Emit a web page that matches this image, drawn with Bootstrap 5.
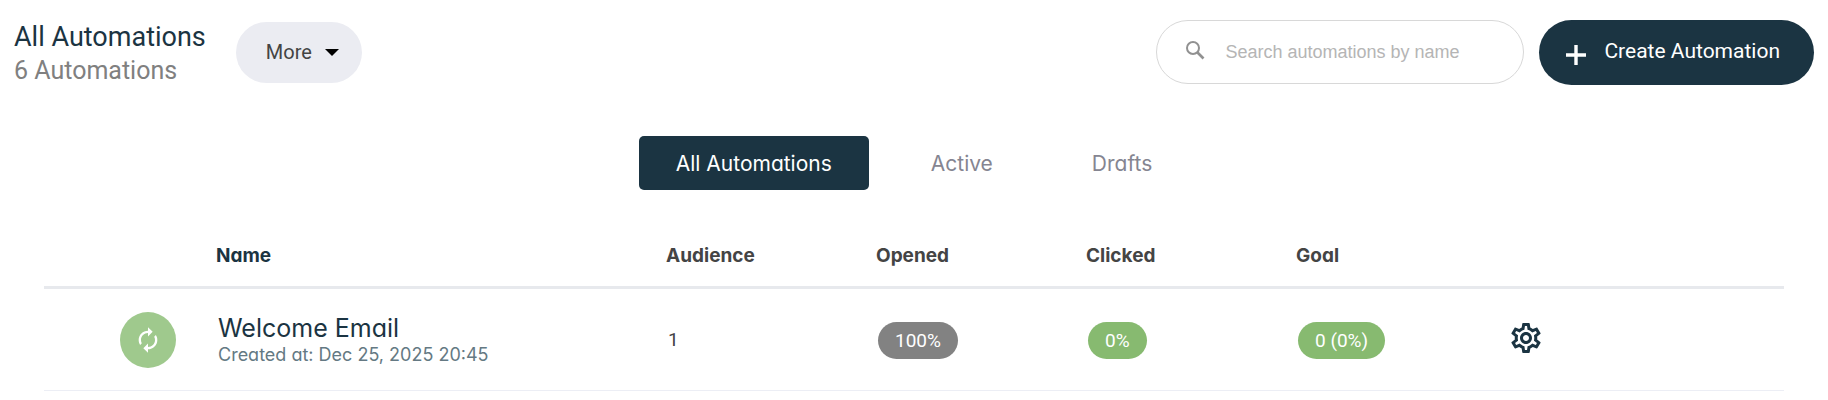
<!DOCTYPE html>
<html lang="en">
<head>
<meta charset="utf-8">
<meta name="viewport" content="width=device-width, initial-scale=1">
<title>Automations</title>
<link href="https://cdn.jsdelivr.net/npm/bootstrap@5.3.0/dist/css/bootstrap.min.css" rel="stylesheet">
<style>
  :root { --ink: #1b3442; --ui: Roboto, sans-serif; --brand: Inter, sans-serif; }
  body { font-family: var(--brand); font-feature-settings: "cv11"; color: #444; background: #fff; }
  .top-bar { padding: 18px 14px 0; font-family: var(--ui); }
  .page-title, .page-count { line-height: 34px; font-weight: 400; margin: 0; }
  .page-title { font-size: 27px; color: var(--ink); }
  .page-count { font-size: 25px; color: #808080; }
  .title-block { padding-top: 2px; margin-bottom: -2px; }
  .more-btn { height: 61px; padding: 0 23px 0 30px; margin-left: 30px; font-size: 20px; color: #444; background: #ebecf2; gap: 13px; }
  .more-btn:hover { background: #e2e3ea; }
  .search-box { width: 368px; height: 64px; padding: 0 28px; gap: 18px; border: 1px solid #d8d8d8; border-radius: 32px; }
  .search-box input { font-family: "Liberation Sans", sans-serif; font-size: 18px; background: none; box-shadow: none !important; }
  .search-box input::placeholder { color: #b5b5b5; opacity: 1; }
  .create-tools { gap: 15px; }
  .create-btn { height: 65px; padding: 0 34px 0 27px; gap: 18px; font-size: 21px; color: #fff; background: var(--ink); }
  .create-btn:hover { color: #fff; background: #27485a; }
  .create-btn svg { margin-top: 5px; }
  .filter-tabs { margin-top: 50px; gap: 25px; }
  .filter-tabs .nav-link { height: 54px; line-height: 56px; padding: 0 37px; font-size: 21px; color: #858591; border-radius: 5px; }
  .filter-tabs .nav-link.active { color: #fff; background: var(--ink); }
  .list-area { padding: 0 44px; margin-top: 32px; }
  .auto-table { table-layout: fixed; width: 100%; }
  .auto-table th { height: 65px; padding: 4px 0 0; font-size: 19px; font-weight: 700; border-bottom: 3px solid #e7e9ed; }
  .auto-table .name-head { color: var(--ink); }
  .auto-table td { height: 103px; padding: 2px 0 0 2px; border-bottom: 1px solid #eceef5; }
  .auto-table .col-state { width: 172px; }
  .auto-table .col-stat { width: 210px; }
  .auto-table .col-tools { width: 278px; }
  .state-dot { width: 56px; height: 56px; margin-left: 74px; background: #9fc98d; }
  .auto-name { font-size: 25px; line-height: 29px; color: var(--ink); }
  .auto-date { font-size: 18px; line-height: 24px; color: #647983; }
  .auto-value { font-family: var(--ui); font-size: 19px; }
  .rate-pill { display: inline-block; height: 37px; line-height: 38px; padding: 0 17px; border-radius: 19px; color: #fff; font-family: var(--ui); font-size: 19px; background: #87ba70; }
  .rate-pill.is-grey { background: #828282; }
  .gear-btn { margin-bottom: 5px; }
</style>
</head>
<body>
<header class="top-bar d-flex align-items-center">
  <div class="title-block">
    <h1 class="page-title">All Automations</h1>
    <p class="page-count">6 Automations</p>
  </div>
  <button type="button" class="more-btn btn rounded-pill border-0 d-flex align-items-center">More
    <svg width="14" height="7" viewBox="0 0 14 7" aria-hidden="true"><path d="M0 0h14L7 7z" fill="#000"/></svg>
  </button>
  <div class="create-tools d-flex align-items-center ms-auto">
    <label class="search-box d-flex align-items-center">
      <svg class="flex-shrink-0" width="22" height="22" viewBox="0 0 22 22" fill="none" stroke="#919191" stroke-width="2" aria-hidden="true"><circle cx="8" cy="7" r="6"/><path d="M12 11l6.500 6.500" stroke-width="2.600"/></svg>
      <input type="search" class="form-control border-0 p-0" placeholder="Search automations by name" aria-label="Search automations by name">
    </label>
    <button type="button" class="create-btn btn rounded-pill border-0 d-flex align-items-center">
      <svg width="20" height="20" viewBox="0 0 20 20" aria-hidden="true"><path d="M10 0v20M0 10h20" stroke="#fff" stroke-width="3.400"/></svg>
      Create Automation
    </button>
  </div>
</header>
<main>
  <nav class="filter-tabs nav nav-pills justify-content-center" aria-label="Automation filter">
    <a class="nav-link active" aria-current="page" href="#all">All Automations</a>
    <a class="nav-link" href="#active">Active</a>
    <a class="nav-link" href="#drafts">Drafts</a>
  </nav>
  <div class="list-area">
    <table class="auto-table">
      <thead>
        <tr>
          <th class="col-state" aria-label="Status"></th>
          <th class="name-head">Name</th>
          <th class="col-stat">Audience</th>
          <th class="col-stat">Opened</th>
          <th class="col-stat">Clicked</th>
          <th class="col-stat">Goal</th>
          <th class="col-tools" aria-label="Settings"></th>
        </tr>
      </thead>
      <tbody>
        <tr>
          <td>
            <span class="state-dot rounded-circle d-flex align-items-center justify-content-center">
              <svg width="28" height="28" viewBox="0 0 24 24" fill="#fff" aria-hidden="true"><path d="M12 6v3l4-4-4-4v3c-4.420 0-8 3.580-8 8 0 1.570.460 3.030 1.240 4.260L6.700 14.800A5.870 5.870 0 0 1 6 12c0-3.310 2.690-6 6-6zm6.760 1.740L17.300 9.200c.440.840.700 1.790.700 2.800 0 3.310-2.690 6-6 6v-3l-4 4 4 4v-3c4.420 0 8-3.580 8-8 0-1.570-.460-3.030-1.240-4.260z"/></svg>
            </span>
          </td>
          <td>
            <div class="auto-name">Welcome Email</div>
            <div class="auto-date">Created at: Dec 25, 2025 20:45</div>
          </td>
          <td><span class="auto-value">1</span></td>
          <td><span class="rate-pill is-grey">100%</span></td>
          <td><span class="rate-pill">0%</span></td>
          <td><span class="rate-pill">0 (0%)</span></td>
          <td>
            <button type="button" class="gear-btn btn p-0 border-0 d-flex" aria-label="Settings">
              <svg width="36" height="36" viewBox="0 0 24 24" fill="#1b3442" aria-hidden="true"><path d="M19.430 12.980c.040-.320.070-.640.070-.980 0-.340-.030-.660-.070-.980l2.110-1.650c.190-.150.240-.420.120-.640l-2-3.460c-.090-.160-.260-.250-.440-.250-.060 0-.120.010-.170.030l-2.490 1c-.520-.400-1.080-.730-1.690-.980l-.380-2.650C14.460 2.180 14.250 2 14 2h-4c-.250 0-.460.180-.490.420l-.380 2.650c-.610.250-1.170.590-1.690.980l-2.490-1c-.060-.020-.120-.030-.180-.030-.170 0-.340.090-.430.250l-2 3.460c-.130.220-.070.490.120.640l2.110 1.650c-.040.320-.070.650-.070.980 0 .330.030.660.070.980l-2.110 1.650c-.190.150-.240.420-.120.640l2 3.460c.090.160.260.250.440.250.060 0 .120-.010.170-.030l2.490-1c.520.400 1.080.730 1.690.980l.380 2.650c.030.240.240.420.490.420h4c.250 0 .460-.180.490-.420l.380-2.650c.610-.250 1.170-.590 1.690-.980l2.490 1c.060.020.120.030.180.030.170 0 .340-.090.430-.250l2-3.460c.120-.220.070-.490-.120-.640l-2.110-1.650zm-1.980-1.710c.040.310.050.520.050.730 0 .210-.020.430-.050.730l-.140 1.130.890.700 1.080.840-.700 1.210-1.270-.510-1.040-.420-.900.680c-.430.320-.840.560-1.250.730l-1.060.430-.160 1.130-.200 1.350h-1.400l-.190-1.350-.160-1.130-1.060-.430c-.430-.180-.830-.410-1.230-.710l-.910-.700-1.060.430-1.270.510-.700-1.210 1.080-.840.890-.700-.140-1.130c-.030-.310-.050-.540-.050-.740s.020-.430.050-.730l.140-1.130-.890-.700-1.080-.840.700-1.210 1.270.510 1.040.420.900-.680c.430-.320.840-.560 1.250-.730l1.060-.430.160-1.130.200-1.350h1.390l.190 1.350.160 1.130 1.060.430c.430.180.830.410 1.230.710l.910.700 1.060-.430 1.270-.510.700 1.210-1.070.850-.890.700.140 1.130zM12 8c-2.210 0-4 1.790-4 4s1.790 4 4 4 4-1.790 4-4-1.790-4-4-4zm0 6c-1.100 0-2-.900-2-2s.900-2 2-2 2 .900 2 2-.900 2-2 2z"/></svg>
            </button>
          </td>
        </tr>
      </tbody>
    </table>
  </div>
</main>
<script src="https://cdn.jsdelivr.net/npm/bootstrap@5.3.0/dist/js/bootstrap.bundle.min.js"></script>
</body>
</html>
